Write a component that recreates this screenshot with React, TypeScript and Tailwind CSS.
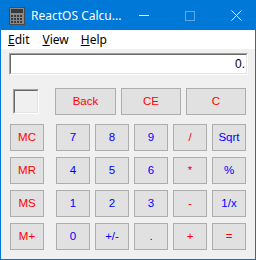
import React from 'react';

type Key = { label: string; red?: boolean };

const rows: Key[][] = [
  [{ label: 'MC', red: true }, { label: '7' }, { label: '8' }, { label: '9' }, { label: '/', red: true }, { label: 'Sqrt' }],
  [{ label: 'MR', red: true }, { label: '4' }, { label: '5' }, { label: '6' }, { label: '*', red: true }, { label: '%' }],
  [{ label: 'MS', red: true }, { label: '1' }, { label: '2' }, { label: '3' }, { label: '-', red: true }, { label: '1/x' }],
  [{ label: 'M+', red: true }, { label: '0' }, { label: '+/-' }, { label: '.' }, { label: '+', red: true }, { label: '=', red: true }],
];

const CalcIcon = () => (
  <svg width="16" height="18" viewBox="0 0 16 18">
    <rect x="0.5" y="0.5" width="15" height="17" fill="#8a8a8a" stroke="#4a4a4a" />
    <rect x="2" y="2" width="12" height="4" fill="#3a3a3a" />
    {[0, 1, 2, 3].map(c =>
      [0, 1, 2].map(r => (
        <rect key={`${c}-${r}`} x={2 + c * 3} y={8 + r * 3} width="2" height="2" fill="#3a3a3a" />
      ))
    )}
  </svg>
);

const Btn: React.FC<{ k: Key; w: string }> = ({ k, w }) => (
  <div
    className={`${w} h-[27px] flex items-center justify-center bg-[#e1e1e1] border border-[#adadad] text-[11.5px] ${
      k.red ? 'text-[#ff0000]' : 'text-[#0000ff]'
    }`}
  >
    {k.label}
  </div>
);

export default function App() {
  return (
    <div
      className="w-[256px] h-[260px] border border-[#0078d7] bg-[#f0f0f0] flex flex-col overflow-hidden"
      style={{ fontFamily: '"Liberation Sans", Arial, sans-serif' }}
    >
      {/* title bar */}
      <div className="h-[29px] bg-[#0078d7] flex items-center shrink-0">
        <div className="ml-[8px] w-[16px] flex items-center">
          <CalcIcon />
        </div>
        <span
          className="ml-[6px] text-white text-[12px] leading-none whitespace-nowrap"
          style={{ fontFamily: '"Noto Sans", "Open Sans", sans-serif' }}
        >
          ReactOS Calcu...
        </span>
        <div className="ml-auto flex items-center h-full">
          <div className="w-[46px] h-full flex items-center justify-center">
            <div className="w-[10px] h-px bg-white" />
          </div>
          <div className="w-[46px] h-full flex items-center justify-center">
            <div className="w-[10px] h-[10px] border border-[#5fa6e6]" />
          </div>
          <div className="w-[46px] h-full flex items-center justify-center">
            <svg width="11" height="11" viewBox="0 0 11 11">
              <path d="M0.5 0.5 L10.5 10.5 M10.5 0.5 L0.5 10.5" stroke="white" strokeWidth="1" />
            </svg>
          </div>
        </div>
      </div>

      {/* menu */}
      <div
        className="h-[19px] bg-white flex items-center text-[12px] text-black shrink-0"
        style={{ fontFamily: '"Noto Sans", "Open Sans", sans-serif' }}
      >
        <span className="ml-[7px]"><span className="underline">E</span>dit</span>
        <span className="ml-[13px]"><span className="underline">V</span>iew</span>
        <span className="ml-[12px]"><span className="underline">H</span>elp</span>
      </div>

      {/* display */}
      <div className="mt-[4px] ml-[8px] mr-[7px] h-[22px] border-t-[#a0a0a0] border-l-[#a0a0a0] border-b-white border-r-white border bg-white">
        <div className="h-full border border-t-[#696969] border-l-[#696969] border-b-[#e3e3e3] border-r-[#e3e3e3] flex items-center justify-end pr-[1px] text-[12px] text-black">
          0.
        </div>
      </div>

      {/* top row */}
      <div className="mt-[13px] flex items-start">
        <div className="ml-[12px] mt-[1px] w-[26px] h-[25px] border border-t-[#a0a0a0] border-l-[#a0a0a0] border-b-white border-r-white">
          <div className="w-full h-full border border-t-[#696969] border-l-[#696969] border-b-[#e3e3e3] border-r-[#e3e3e3]" />
        </div>
        <div className="ml-[16px] flex gap-[5px]">
          <Btn k={{ label: 'Back', red: true }} w="w-[61px]" />
          <Btn k={{ label: 'CE', red: true }} w="w-[60px]" />
          <Btn k={{ label: 'C', red: true }} w="w-[60px]" />
        </div>
      </div>

      {/* keypad */}
      <div className="mt-[9px] flex flex-col gap-[6px]">
        {rows.map((row, i) => (
          <div key={i} className="flex ml-[9px]">
            <Btn k={row[0]} w="w-[34px]" />
            <div className="ml-[12px] flex gap-[5px]">
              {row.slice(1).map(k => (
                <Btn key={k.label} k={k} w="w-[34px]" />
              ))}
            </div>
          </div>
        ))}
      </div>
    </div>
  );
}
